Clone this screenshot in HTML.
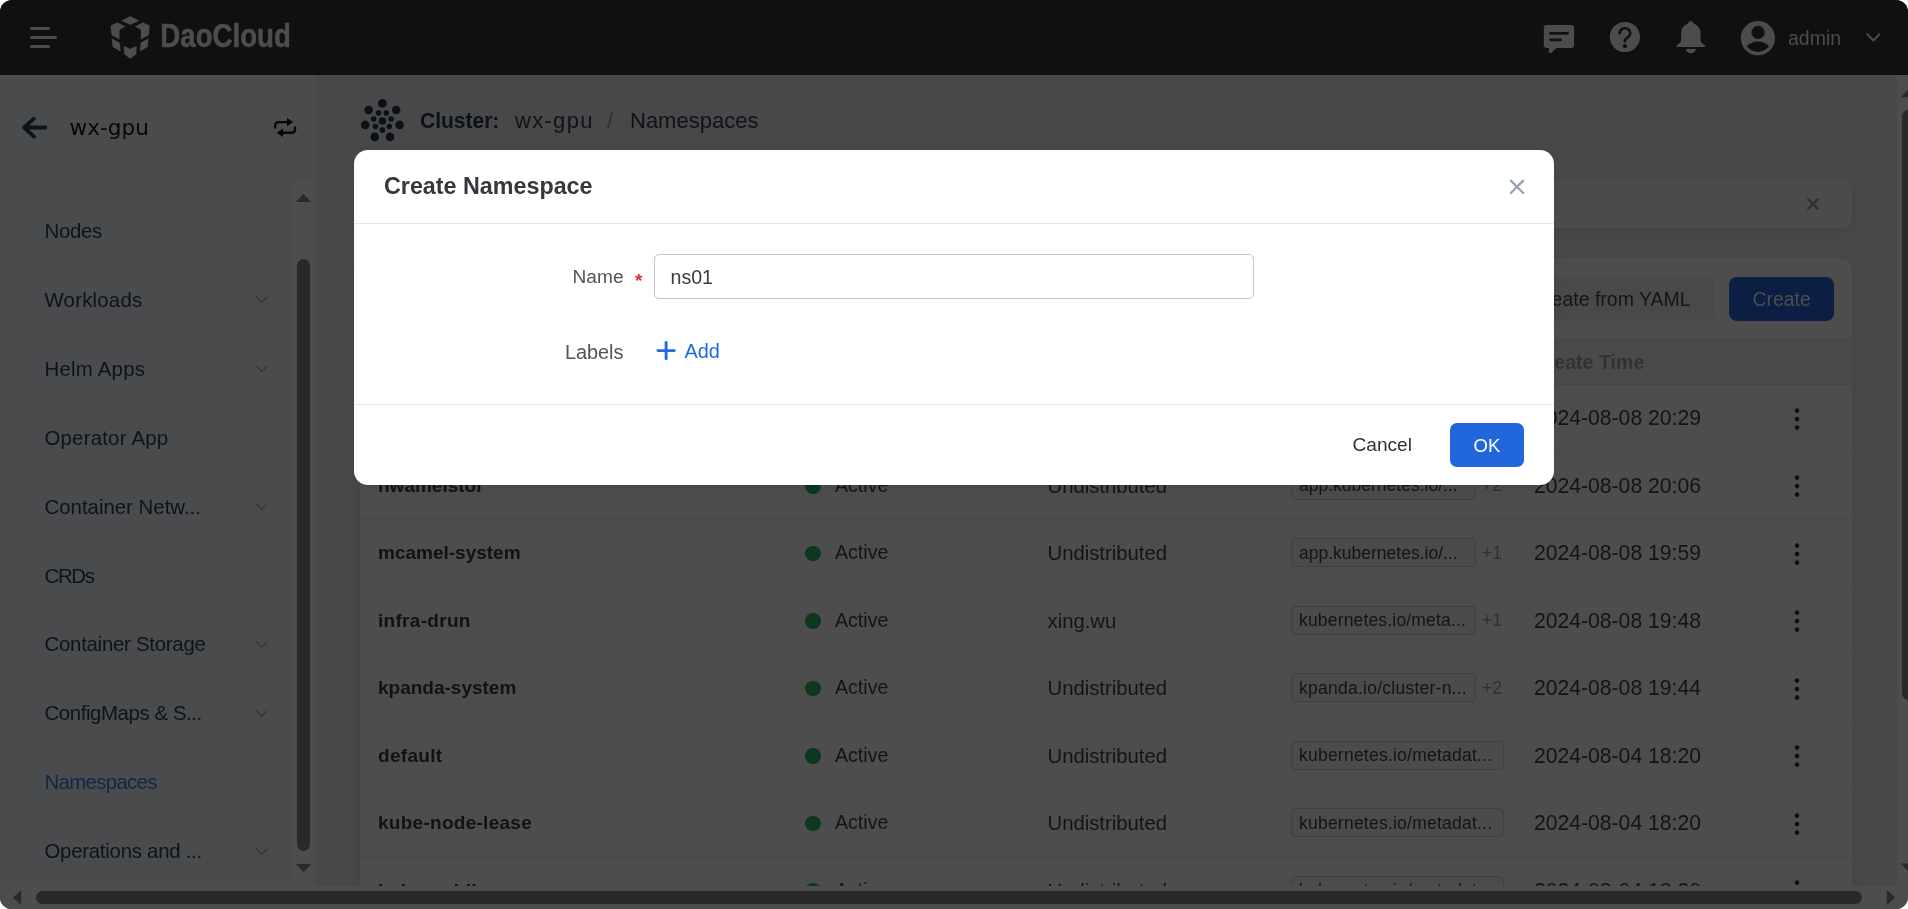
<!DOCTYPE html>
<html lang="en">
<head>
<meta charset="utf-8">
<title>Create Namespace</title>
<style>
*{box-sizing:border-box;margin:0;padding:0}
html,body{width:1908px;height:909px;overflow:hidden;background:#fff}
body{font-family:"Liberation Sans",sans-serif;color:#0e131b;position:relative}
.abs{position:absolute}
.t{position:absolute;white-space:nowrap;line-height:1}
.nm{color:#111213}
#frame{position:absolute;left:0;top:0;width:1908px;height:909px;border-radius:12px;overflow:hidden;background:#484848;will-change:transform}
/* header */
#hdr{position:absolute;left:0;top:0;width:1908px;height:75px;background:#0f1012}
/* sidebar */
#side{position:absolute;left:0;top:75px;width:316px;height:834px;background:#4a4b4d}
#side .it{position:absolute;left:44.5px;font-size:20.4px;line-height:1;white-space:nowrap;color:#0e131b}
#side .chev{position:absolute;left:255px;width:14px;height:8px}
/* main */
#main{position:absolute;left:316px;top:75px;width:1581px;height:811px;background:#484848}
/* scrollbars */
#vs{position:absolute;left:1897px;top:75px;width:20px;height:811px;background:#4d4d4d}
#hs{position:absolute;left:0;top:886px;width:1908px;height:23px;background:#4d4d4d}
.thumb{position:absolute;background:#292929}
/* table */
#card{color:#131416;position:absolute;left:360px;top:258px;width:1492px;height:700px;background:#4d4d4d;border-radius:12px 12px 0 0;box-shadow:0 2px 8px rgba(0,0,0,.08)}
#alert{position:absolute;left:360px;top:179px;width:1492px;height:49px;background:#4b4b4c;border-radius:9px;box-shadow:0 3px 8px rgba(0,0,0,.10)}
.row{position:absolute;left:360px;width:1492px;height:68px;border-bottom:1px solid #494949}

.dot{position:absolute;width:15.6px;height:15.6px;border-radius:50%;background:#0d381f}
.tag{position:absolute;height:29px;border:1px solid #3f4041;border-radius:4px;background:#4b4b4c}
.kebab{position:absolute;width:6px;height:24px}
/* modal */
#modal{position:absolute;left:354px;top:150px;width:1200px;height:335px;background:#fff;border-radius:14px;box-shadow:0 3px 10px rgba(0,0,0,.06)}
#modal .line{position:absolute;left:0;width:1200px;height:1px;background:#e4e7f0}
</style>
</head>
<body>
<div id="frame">
<div id="main"></div>
<div id="side">
<svg class="abs" style="left:0;top:0" width="316" height="120" viewBox="0 75 316 120">
<path d="M45.3 127.5H24.3M34 118.7l-9.9 8.8 9.9 9.1" stroke="#0e131b" stroke-width="3.8" fill="none" stroke-linecap="round" stroke-linejoin="round"/>
<path d="M275.2 127.4v-2.3a3 3 0 0 1 3-3h9.5" stroke="#050505" stroke-width="2.4" fill="none" stroke-linecap="round"/>
<polygon points="287,117.9 293.2,122.1 287,126.3" fill="#050505"/>
<path d="M295 127.4v2.3a3 3 0 0 1-3 3h-9.5" stroke="#050505" stroke-width="2.4" fill="none" stroke-linecap="round"/>
<polygon points="283,128.5 276.8,132.7 283,136.9" fill="#050505"/>
</svg>
<div class="t" id="sw" style="left:69.5px;top:39.2px;font-family:'DejaVu Sans','Liberation Sans',sans-serif;font-size:21.6px;line-height:28px;color:#060709">wx-gpu</div>
<div class="abs" style="left:24px;top:104px;width:269px;height:1px;background:#454648"></div>
<div class="abs" style="left:292px;top:105px;width:23px;height:706px;background:#4d4d4d"></div>
<div class="thumb" style="left:297px;top:184px;width:13px;height:592px;border-radius:6.5px"></div>
<svg class="abs" style="left:292px;top:105px" width="24" height="706" viewBox="292 180 24 706"><polygon points="295.8,202 311.2,202 303.5,193.8" fill="#2a2a2a"/><polygon points="295.8,864 311.2,864 303.5,872.2" fill="#2a2a2a"/></svg>
<div class="it" style="top:144.0px;line-height:24px;letter-spacing:-0.32px">Nodes</div>
<div class="it" style="top:212.9px;line-height:24px;letter-spacing:0.21px">Workloads</div>
<svg class="chev" style="top:221.0px" width="16" height="10" viewBox="0 0 16 10"><path d="M1.2 1.2l6.5 6.8 6.5-6.8" stroke="#333538" stroke-width="1.6" fill="none" stroke-linecap="round" stroke-linejoin="round"/></svg>
<div class="it" style="top:281.8px;line-height:24px;letter-spacing:0.23px">Helm Apps</div>
<svg class="chev" style="top:290.0px" width="16" height="10" viewBox="0 0 16 10"><path d="M1.2 1.2l6.5 6.8 6.5-6.8" stroke="#333538" stroke-width="1.6" fill="none" stroke-linecap="round" stroke-linejoin="round"/></svg>
<div class="it" style="top:350.7px;line-height:24px;letter-spacing:0.21px">Operator App</div>
<div class="it" style="top:419.6px;line-height:24px;letter-spacing:0.00px">Container Netw...</div>
<svg class="chev" style="top:428.0px" width="16" height="10" viewBox="0 0 16 10"><path d="M1.2 1.2l6.5 6.8 6.5-6.8" stroke="#333538" stroke-width="1.6" fill="none" stroke-linecap="round" stroke-linejoin="round"/></svg>
<div class="it" style="top:488.5px;line-height:24px;letter-spacing:-1.33px">CRDs</div>
<div class="it" style="top:557.4px;line-height:24px;letter-spacing:-0.26px">Container Storage</div>
<svg class="chev" style="top:566.0px" width="16" height="10" viewBox="0 0 16 10"><path d="M1.2 1.2l6.5 6.8 6.5-6.8" stroke="#333538" stroke-width="1.6" fill="none" stroke-linecap="round" stroke-linejoin="round"/></svg>
<div class="it" style="top:626.3px;line-height:24px;letter-spacing:-0.41px">ConfigMaps &amp; S...</div>
<svg class="chev" style="top:635.0px" width="16" height="10" viewBox="0 0 16 10"><path d="M1.2 1.2l6.5 6.8 6.5-6.8" stroke="#333538" stroke-width="1.6" fill="none" stroke-linecap="round" stroke-linejoin="round"/></svg>
<div class="it" style="top:695.2px;line-height:24px;color:#11264a;letter-spacing:-0.67px">Namespaces</div>
<div class="it" style="top:764.1px;line-height:24px;letter-spacing:-0.26px">Operations and ...</div>
<svg class="chev" style="top:773.0px" width="16" height="10" viewBox="0 0 16 10"><path d="M1.2 1.2l6.5 6.8 6.5-6.8" stroke="#333538" stroke-width="1.6" fill="none" stroke-linecap="round" stroke-linejoin="round"/></svg>
</div>
<svg class="abs" style="left:356px;top:95px" width="54" height="52" viewBox="356 95 54 52"><g fill="#0b1119"><circle cx="382.4" cy="121.0" r="3.8"/><circle cx="382.40" cy="103.40" r="4.3"/><circle cx="382.40" cy="129.90" r="2.8"/><circle cx="396.16" cy="110.03" r="4.3"/><circle cx="375.44" cy="126.55" r="2.8"/><circle cx="399.56" cy="124.92" r="4.3"/><circle cx="373.72" cy="119.02" r="2.8"/><circle cx="390.04" cy="136.86" r="4.3"/><circle cx="378.54" cy="112.98" r="2.8"/><circle cx="374.76" cy="136.86" r="4.3"/><circle cx="386.26" cy="112.98" r="2.8"/><circle cx="365.24" cy="124.92" r="4.3"/><circle cx="391.08" cy="119.02" r="2.8"/><circle cx="368.64" cy="110.03" r="4.3"/><circle cx="389.36" cy="126.55" r="2.8"/></g></svg>
<div class="t" id="bc1" style="left:420px;top:107px;font-size:22.4px;transform:scaleX(.938);transform-origin:0 0;font-weight:700;line-height:28px;color:#0b1119">Cluster:</div>
<div class="t" id="bc2" style="top:107px;left:515px;font-size:22px;letter-spacing:1.3px;line-height:28px;color:#0e131b">wx-gpu</div>
<div class="t" id="bc3" style="top:107px;left:607px;font-size:22px;line-height:28px;color:#2e3136">/</div>
<div class="t" id="bc4" style="top:107px;left:630px;font-size:22px;line-height:28px;color:#0e131b">Namespaces</div>
<div id="alert"><svg class="abs" style="left:1446.2px;top:18.2px" width="14" height="14" viewBox="0 0 14 14"><path d="M2.2 2.2l9.6 9.6M11.8 2.2l-9.6 9.6" stroke="#2b2d31" stroke-width="2.1" stroke-linecap="round"/></svg></div>
<div id="card">
<div class="abs" style="left:1150px;top:19px;width:204px;height:44px;border-radius:8px;background:#48494b"></div>
<div class="t" id="yaml" style="left:1171px;top:26.5px;font-size:19.5px;line-height:28px;color:#141516">Create from YAML</div>
<div class="abs" style="left:1369px;top:19px;width:105px;height:44px;border-radius:8px;background:#0b1f45"></div>
<div class="t" id="crt" style="left:1392.5px;top:26.6px;font-size:19.4px;line-height:28px;color:#4d4d4d">Create</div>
<div class="abs" style="left:0;top:81px;width:1492px;height:46px;background:#4a4a4b;border-top:1px solid #464647;border-bottom:1px solid #464647"></div>
<div class="abs" style="left:1401px;top:82px;width:1px;height:44px;background:#464647"></div>
<div class="t th" style="left:18px;top:90px;font-size:19.2px;font-weight:700;line-height:28px;color:#303234">Name</div>
<div class="t th" style="left:446px;top:90px;font-size:19.2px;font-weight:700;line-height:28px;color:#303234">Status</div>
<div class="t th" style="left:688px;top:90px;font-size:19.2px;font-weight:700;line-height:28px;color:#303234">Workspace</div>
<div class="t th" style="left:931px;top:90px;font-size:19.2px;font-weight:700;line-height:28px;color:#303234">Labels</div>
<div class="t th" style="left:1172.5px;top:90px;font-size:19.6px;font-weight:700;line-height:28px;color:#303234">Create Time</div>
<div class="abs" style="left:0;top:193.0px;width:1492px;height:1px;background:#484849"></div>
<div class="t nm" style="left:18px;top:146.1px;font-size:19px;font-weight:700;line-height:28px">insight-system</div>
<div class="dot" style="left:445px;top:152.8px"></div>
<div class="t st" style="left:475px;top:145.4px;font-size:19.6px;line-height:28px">Active</div>
<div class="t ws" style="left:687.5px;top:146.1px;font-size:20.3px;line-height:28px">Undistributed</div>
<div class="tag" style="left:931px;top:145.2px;width:184.5px"></div>
<div class="t lb" style="left:939px;top:145.6px;font-size:17.5px;line-height:28px">app.kubernetes.io/...</div>
<div class="t pl" style="left:1122px;top:145.6px;font-size:17.5px;line-height:28px;color:#2c3036">+2</div>
<div class="t tm" style="left:1174px;top:146.1px;font-size:21.15px;line-height:28px">2024-08-08 20:29</div>
<svg class="kebab" style="left:1433.9px;top:148.8px" viewBox="0 0 6 24"><g fill="#0b1119"><circle cx="3" cy="3.6" r="2.3"/><circle cx="3" cy="12.1" r="2.3"/><circle cx="3" cy="20.6" r="2.3"/></g></svg>
<div class="abs" style="left:0;top:260.5px;width:1492px;height:1px;background:#484849"></div>
<div class="t nm" style="left:18px;top:213.6px;font-size:19px;font-weight:700;line-height:28px">hwameistor</div>
<div class="dot" style="left:445px;top:220.3px"></div>
<div class="t st" style="left:475px;top:212.9px;font-size:19.6px;line-height:28px">Active</div>
<div class="t ws" style="left:687.5px;top:213.6px;font-size:20.3px;line-height:28px">Undistributed</div>
<div class="tag" style="left:931px;top:212.8px;width:184.5px"></div>
<div class="t lb" style="left:939px;top:213.1px;font-size:17.5px;line-height:28px">app.kubernetes.io/...</div>
<div class="t pl" style="left:1122px;top:213.1px;font-size:17.5px;line-height:28px;color:#2c3036">+2</div>
<div class="t tm" style="left:1174px;top:213.6px;font-size:21.15px;line-height:28px">2024-08-08 20:06</div>
<svg class="kebab" style="left:1433.9px;top:216.2px" viewBox="0 0 6 24"><g fill="#0b1119"><circle cx="3" cy="3.6" r="2.3"/><circle cx="3" cy="12.1" r="2.3"/><circle cx="3" cy="20.6" r="2.3"/></g></svg>
<div class="abs" style="left:0;top:328.0px;width:1492px;height:1px;background:#484849"></div>
<div class="t nm" style="left:18px;top:281.1px;font-size:19px;font-weight:700;line-height:28px">mcamel-system</div>
<div class="dot" style="left:445px;top:287.8px"></div>
<div class="t st" style="left:475px;top:280.4px;font-size:19.6px;line-height:28px">Active</div>
<div class="t ws" style="left:687.5px;top:281.1px;font-size:20.3px;line-height:28px">Undistributed</div>
<div class="tag" style="left:931px;top:280.2px;width:184.5px"></div>
<div class="t lb" style="left:939px;top:280.6px;font-size:17.5px;line-height:28px">app.kubernetes.io/...</div>
<div class="t pl" style="left:1122px;top:280.6px;font-size:17.5px;line-height:28px;color:#2c3036">+1</div>
<div class="t tm" style="left:1174px;top:281.1px;font-size:21.15px;line-height:28px">2024-08-08 19:59</div>
<svg class="kebab" style="left:1433.9px;top:283.8px" viewBox="0 0 6 24"><g fill="#0b1119"><circle cx="3" cy="3.6" r="2.3"/><circle cx="3" cy="12.1" r="2.3"/><circle cx="3" cy="20.6" r="2.3"/></g></svg>
<div class="abs" style="left:0;top:395.5px;width:1492px;height:1px;background:#484849"></div>
<div class="t nm" style="left:18px;top:348.6px;font-size:19px;font-weight:700;line-height:28px;letter-spacing:0.3px">infra-drun</div>
<div class="dot" style="left:445px;top:355.3px"></div>
<div class="t st" style="left:475px;top:347.9px;font-size:19.6px;line-height:28px">Active</div>
<div class="t ws" style="left:687.5px;top:348.6px;font-size:20.3px;line-height:28px">xing.wu</div>
<div class="tag" style="left:931px;top:347.8px;width:184.5px"></div>
<div class="t lb" style="left:939px;top:348.1px;font-size:17.5px;line-height:28px;letter-spacing:0.17px">kubernetes.io/meta...</div>
<div class="t pl" style="left:1122px;top:348.1px;font-size:17.5px;line-height:28px;color:#2c3036">+1</div>
<div class="t tm" style="left:1174px;top:348.6px;font-size:21.15px;line-height:28px">2024-08-08 19:48</div>
<svg class="kebab" style="left:1433.9px;top:351.2px" viewBox="0 0 6 24"><g fill="#0b1119"><circle cx="3" cy="3.6" r="2.3"/><circle cx="3" cy="12.1" r="2.3"/><circle cx="3" cy="20.6" r="2.3"/></g></svg>
<div class="abs" style="left:0;top:463.0px;width:1492px;height:1px;background:#484849"></div>
<div class="t nm" style="left:18px;top:416.1px;font-size:19px;font-weight:700;line-height:28px">kpanda-system</div>
<div class="dot" style="left:445px;top:422.8px"></div>
<div class="t st" style="left:475px;top:415.4px;font-size:19.6px;line-height:28px">Active</div>
<div class="t ws" style="left:687.5px;top:416.1px;font-size:20.3px;line-height:28px">Undistributed</div>
<div class="tag" style="left:931px;top:415.2px;width:184.5px"></div>
<div class="t lb" style="left:939px;top:415.6px;font-size:17.5px;line-height:28px;letter-spacing:0.25px">kpanda.io/cluster-n...</div>
<div class="t pl" style="left:1122px;top:415.6px;font-size:17.5px;line-height:28px;color:#2c3036">+2</div>
<div class="t tm" style="left:1174px;top:416.1px;font-size:21.15px;line-height:28px">2024-08-08 19:44</div>
<svg class="kebab" style="left:1433.9px;top:418.8px" viewBox="0 0 6 24"><g fill="#0b1119"><circle cx="3" cy="3.6" r="2.3"/><circle cx="3" cy="12.1" r="2.3"/><circle cx="3" cy="20.6" r="2.3"/></g></svg>
<div class="abs" style="left:0;top:530.5px;width:1492px;height:1px;background:#484849"></div>
<div class="t nm" style="left:18px;top:483.6px;font-size:19px;font-weight:700;line-height:28px;letter-spacing:0.3px">default</div>
<div class="dot" style="left:445px;top:490.3px"></div>
<div class="t st" style="left:475px;top:482.9px;font-size:19.6px;line-height:28px">Active</div>
<div class="t ws" style="left:687.5px;top:483.6px;font-size:20.3px;line-height:28px">Undistributed</div>
<div class="tag" style="left:931px;top:482.8px;width:213px"></div>
<div class="t lb" style="left:939px;top:483.1px;font-size:17.5px;line-height:28px;letter-spacing:0.23px">kubernetes.io/metadat...</div>
<div class="t tm" style="left:1174px;top:483.6px;font-size:21.15px;line-height:28px">2024-08-04 18:20</div>
<svg class="kebab" style="left:1433.9px;top:486.2px" viewBox="0 0 6 24"><g fill="#0b1119"><circle cx="3" cy="3.6" r="2.3"/><circle cx="3" cy="12.1" r="2.3"/><circle cx="3" cy="20.6" r="2.3"/></g></svg>
<div class="abs" style="left:0;top:598.0px;width:1492px;height:1px;background:#484849"></div>
<div class="t nm" style="left:18px;top:551.0px;font-size:19px;font-weight:700;line-height:28px;letter-spacing:0.27px">kube-node-lease</div>
<div class="dot" style="left:445px;top:557.7px"></div>
<div class="t st" style="left:475px;top:550.3px;font-size:19.6px;line-height:28px">Active</div>
<div class="t ws" style="left:687.5px;top:551.0px;font-size:20.3px;line-height:28px">Undistributed</div>
<div class="tag" style="left:931px;top:550.2px;width:213px"></div>
<div class="t lb" style="left:939px;top:550.5px;font-size:17.5px;line-height:28px;letter-spacing:0.23px">kubernetes.io/metadat...</div>
<div class="t tm" style="left:1174px;top:551.0px;font-size:21.15px;line-height:28px">2024-08-04 18:20</div>
<svg class="kebab" style="left:1433.9px;top:553.8px" viewBox="0 0 6 24"><g fill="#0b1119"><circle cx="3" cy="3.6" r="2.3"/><circle cx="3" cy="12.1" r="2.3"/><circle cx="3" cy="20.6" r="2.3"/></g></svg>
<div class="abs" style="left:0;top:665.5px;width:1492px;height:1px;background:#484849"></div>
<div class="t nm" style="left:18px;top:618.5px;font-size:19px;font-weight:700;line-height:28px;letter-spacing:0.27px">kube-public</div>
<div class="dot" style="left:445px;top:625.2px"></div>
<div class="t st" style="left:475px;top:617.8px;font-size:19.6px;line-height:28px">Active</div>
<div class="t ws" style="left:687.5px;top:618.5px;font-size:20.3px;line-height:28px">Undistributed</div>
<div class="tag" style="left:931px;top:617.8px;width:213px"></div>
<div class="t lb" style="left:939px;top:618.0px;font-size:17.5px;line-height:28px;letter-spacing:0.23px">kubernetes.io/metadat...</div>
<div class="t tm" style="left:1174px;top:618.5px;font-size:21.15px;line-height:28px">2024-08-04 18:20</div>
<svg class="kebab" style="left:1433.9px;top:621.2px" viewBox="0 0 6 24"><g fill="#0b1119"><circle cx="3" cy="3.6" r="2.3"/><circle cx="3" cy="12.1" r="2.3"/><circle cx="3" cy="20.6" r="2.3"/></g></svg>
</div>
<div id="vs"><div class="thumb" style="left:5px;top:35px;width:13px;height:590px;border-radius:6.5px"></div>
<svg class="abs" style="left:0;top:0" width="20" height="811" viewBox="1897 75 20 811"><polygon points="1900.8,97.2 1916.2,97.2 1908.5,89" fill="#2a2a2a"/><polygon points="1900.8,863.4 1916.2,863.4 1908.5,871.6" fill="#2a2a2a"/></svg></div>
<div id="hs"><div class="thumb" style="left:36px;top:5px;width:1826px;height:13px;border-radius:6.5px"></div>
<svg class="abs" style="left:0;top:0" width="1908" height="23" viewBox="0 886 1908 23"><polygon points="21.2,890 21.2,905.2 13,897.6" fill="#2a2a2a"/><polygon points="1886.8,890 1886.8,905.2 1895,897.6" fill="#2a2a2a"/></svg></div>
<div id="hdr">
<svg class="abs" style="left:0;top:0" width="1908" height="75" viewBox="0 0 1908 75">
<g fill="#4a4b4d">
<rect x="30" y="27" width="20" height="3" rx="1.5"/>
<rect x="30" y="36" width="27" height="3" rx="1.5"/>
<rect x="30" y="45" width="20" height="3" rx="1.5"/>
</g>
<g fill="#4d4d4d" transform="translate(100 8)">
<g transform="scale(0.10482)" stroke="#0f1012" stroke-width="7" stroke-linejoin="miter">
<polygon points="288,75 382,121 289,165 197,121"/>
<polygon points="97,167 165,133 250,176 190,210 190,306 107,262"/>
<polygon points="478,167 410,133 328,176 386,210 386,306 468,262"/>
<polygon points="107,284 192,329 200,423 118,373"/>
<polygon points="468,284 384,329 376,423 457,373"/>
<polygon points="222,355 288,386 355,355 350,441 288,488 228,441"/>
</g>
</g>
<text x="160.3" y="47" font-family="'Liberation Sans',sans-serif" font-weight="700" font-size="34" fill="#4d4d4d" stroke="#4d4d4d" stroke-width="0.6" textLength="130.6" lengthAdjust="spacingAndGlyphs">DaoCloud</text>
<!-- chat -->
<g>
<path fill="#4b4c4e" d="M1546.6 24.9h24.7a2.8 2.8 0 0 1 2.8 2.8v17.5a2.8 2.8 0 0 1-2.8 2.8h-14.6l-5.3 4.7c-1.3 1.1-2.6.6-2.6-1.1V48h-2.2a2.8 2.8 0 0 1-2.8-2.8V27.7a2.8 2.8 0 0 1 2.8-2.8z"/>
<path d="M1550.6 33.4h17M1550.6 39.8h10" stroke="#0f1012" stroke-width="2.8" stroke-linecap="round" fill="none"/>
</g>
<!-- help -->
<circle cx="1624.9" cy="37" r="15.1" fill="#4b4c4e"/>
<path d="M1619.7 33.2A5.25 5.25 0 0 1 1630.2 33.7C1630.2 37.4 1624.9 37.4 1624.9 41.2" stroke="#0f1012" stroke-width="2.6" stroke-linecap="round" fill="none"/>
<circle cx="1624.9" cy="46.2" r="2.1" fill="#0f1012"/>
<!-- bell -->
<path fill="#4b4c4e" d="M1690.8 21.3c1.6 0 2.8 1 3 2.5 4 1.3 6.7 4.9 6.7 9.3v6.7c0 1.5.6 2.4 1.8 3.4l2.2 1.9c1.4 1.2.8 1.9-.9 1.9h-25.6c-1.7 0-2.3-.7-.9-1.9l2.2-1.9c1.2-1 1.8-1.9 1.8-3.4v-6.7c0-4.4 2.7-8 6.7-9.3.2-1.5 1.4-2.5 3-2.5z"/>
<path fill="#4b4c4e" d="M1685.7 49.1h10.2c-.3 2.4-2.4 4.2-5.1 4.2s-4.8-1.8-5.1-4.2z"/>
<!-- avatar -->
<circle cx="1757.9" cy="38.1" r="17.1" fill="#4b4c4e"/>
<circle cx="1758.1" cy="32.4" r="6.6" fill="#0f1012"/>
<path fill="#0f1012" d="M1746.8 46.3c5.8-6.3 16.5-6.3 22.3 0-5.8 7.5-16.5 7.5-22.3 0z"/>
<text x="1788" y="44.5" font-family="'Liberation Sans',sans-serif" font-size="19.5" fill="#4b4c4e">admin</text>
<path d="M1867.4 34.2l6 6.3 6-6.3" stroke="#4b4c4e" stroke-width="2" fill="none" stroke-linecap="round" stroke-linejoin="round"/>
</svg>
</div>
<div id="modal">
<div class="t" id="mt" style="left:30px;top:21px;font-size:23.3px;font-weight:700;line-height:30px;color:#35383c">Create Namespace</div>
<svg class="abs" style="left:1153px;top:27px" width="20" height="20" viewBox="0 0 20 20"><path d="M3.8 3.6l12.4 12.4M16.2 3.6L3.8 16" stroke="#98a1af" stroke-width="2.2" stroke-linecap="round"/></svg>
<div class="line" style="top:73px"></div>
<div class="t" id="ln" style="right:930.5px;top:113px;font-size:19.1px;line-height:28px;color:#505358">Name</div>
<div class="t" id="ast" style="left:281px;top:121px;font-size:19px;font-weight:700;line-height:20px;color:#e02d3c">*</div>
<div class="abs" style="left:300px;top:104px;width:600px;height:45px;border:1px solid #bfc5da;border-radius:5px;background:#fff"></div>
<div class="t" id="iv" style="left:316.5px;top:113px;font-size:19.6px;line-height:28px;color:#3a3d42">ns01</div>
<div class="t" id="ll" style="right:930.5px;top:187.5px;font-size:19.9px;line-height:28px;color:#505358">Labels</div>
<svg class="abs" style="left:300px;top:188px" width="24" height="24" viewBox="0 0 24 24"><path d="M12.1 4.4v16.4M3.9 12.6h16.4" stroke="#2468dc" stroke-width="2.9" stroke-linecap="round"/></svg>
<div class="t" id="add" style="left:330.5px;top:187px;font-size:19.9px;line-height:28px;color:#2468dc">Add</div>
<div class="line" style="top:254px"></div>
<div class="t" id="cn" style="left:998.5px;top:280.8px;font-size:19.1px;line-height:28px;color:#2f3237">Cancel</div>
<div class="abs" style="left:1096px;top:273px;width:74px;height:44px;border-radius:7px;background:#2266dc"></div>
<div class="t" id="ok" style="left:1119.5px;top:282px;font-size:18.5px;line-height:28px;color:#fff">OK</div>
</div>
</div>
</body>
</html>
